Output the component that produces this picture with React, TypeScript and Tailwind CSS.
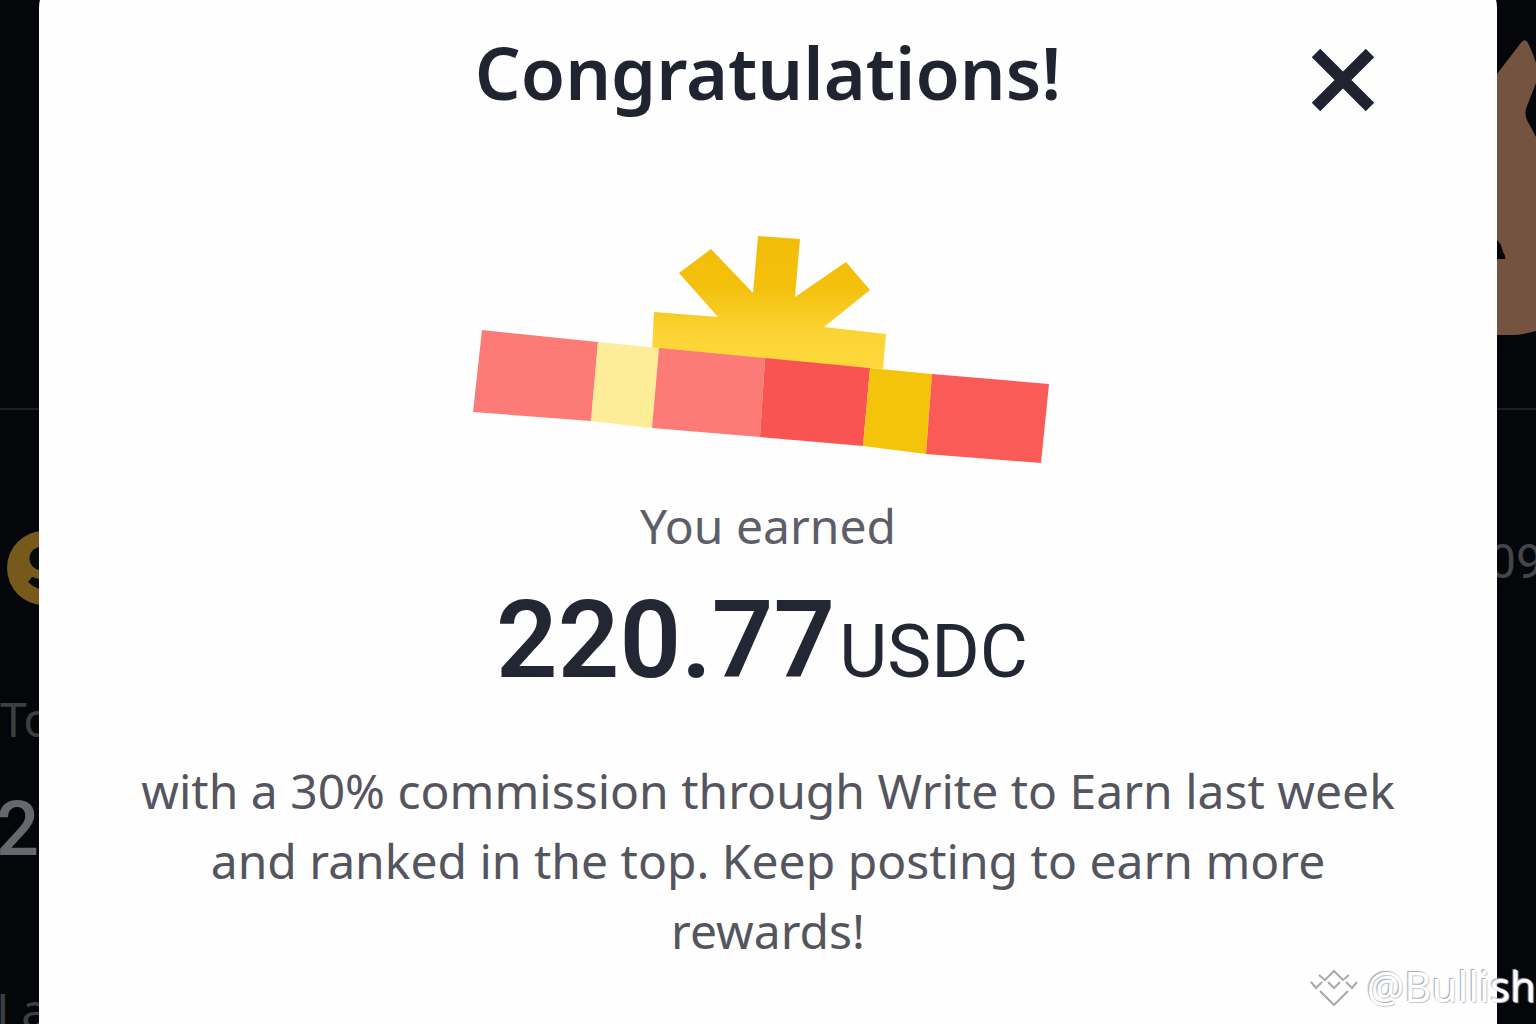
import React from "react";

const GiftLid: React.FC = () => (
  <svg viewBox="0 0 580 232" className="h-[232px] w-[580px] max-w-full" role="img" aria-label="Gift">
    <defs>
      <linearGradient id="bow" gradientUnits="userSpaceOnUse" x1="0" y1="0" x2="0" y2="130">
        <stop offset="0" stopColor="#f3bd08" />
        <stop offset="0.42" stopColor="#f3c00c" />
        <stop offset="0.78" stopColor="#fcd435" />
        <stop offset="1" stopColor="#fed73a" />
      </linearGradient>
    </defs>
    <path
      d="M184 80L248 85L209 41L241 17L283 61L288 4L330 7L325 65L376 30L400 58L354 95L416 102L413 137L182 119Z"
      fill="url(#bow)"
    />
    <path d="M12 98L128 110L121 189L3 180Z" fill="#fd7b77" />
    <path d="M128 110L189 116L182 196L121 189Z" fill="#fdec98" />
    <path d="M189 116L295 126L290 205L182 196Z" fill="#fd7b77" />
    <path d="M295 126L400 136L393 214L290 205Z" fill="#fa5452" />
    <path d="M400 136L462 142L456 222L393 214Z" fill="#f4c40b" />
    <path d="M462 142L579 152L571 231L456 222Z" fill="#fb5b57" />
  </svg>
);

const Watermark: React.FC = () => (
  <div className="absolute right-0 bottom-0 flex h-[76px] items-center gap-2 whitespace-nowrap text-white">
    <svg viewBox="0 0 48 40" className="h-10 w-12" fill="none">
      <path
        d="M9 9L15 14L24 5L33 14L39 9M1 16L6 22L12 16M18 16L24 22L30 16M36 16L42 22L47 16M10 25L24 39L38 25"
        stroke="#a9a9ad"
        strokeWidth="2"
      />
    </svg>
    <span className="text-[42px] leading-none [text-shadow:-1px_-1px_1px_#a6a6ab,1px_1px_1px_#c6c6ca]">
      @Bullish
    </span>
  </div>
);

const LeftEdge: React.FC = () => (
  <div className="flex flex-col overflow-hidden whitespace-nowrap" aria-hidden="true">
    <div className="box-content h-[408px] shrink-0 border-b-2 border-[#1c1e22]" />
    <svg viewBox="0 0 39 74" className="mt-[121px] h-[74px] w-[39px] shrink-0">
      <circle cx="44" cy="37" r="37" fill="#775a1b" />
      <path d="M39 16C31 18 28 25 30 31C32 36 35 38 39 39Z" fill="#090a0a" />
      <path d="M32 46L28 51Q33 56 39 58L39 48Z" fill="#090a0a" />
    </svg>
    <div className="mt-[86px] h-[56px] text-[48px] leading-[56px] text-[#3c3e42]">To</div>
    <div className="mt-10 -ml-1 h-[84px] font-[Roboto] text-[76px] leading-[84px] font-medium text-[#67686d]">
      2
    </div>
    <div className="mt-[111px] -ml-1 h-[41px] text-[48px] leading-[56px] text-[#3c3e42]">La</div>
  </div>
);

const RightEdge: React.FC = () => (
  <div className="flex flex-col overflow-hidden whitespace-nowrap" aria-hidden="true">
    <svg viewBox="0 0 39 408" className="h-[408px] w-[39px] shrink-0">
      <path
        d="M0 74L23 44Q28 37 31 43Q36 53 39 63V83L30 106Q27 113 30 120L39 137V331Q25 335 15 335H0V259H8Q9 256 6 252Q4 243 0 240Z"
        fill="#745440"
      />
    </svg>
    <div className="h-[2px] shrink-0 bg-[#1c1e22]" />
    <div className="mt-[122px] -ml-2 font-[Roboto] text-[48px] leading-[60px] text-[#44454a]">09</div>
  </div>
);

export default function App() {
  return (
    <div className="relative grid min-h-screen grid-cols-[39px_minmax(0,1fr)_39px] overflow-hidden bg-[#040609] font-['Noto_Sans',sans-serif]">
      <LeftEdge />
      <main
        role="dialog"
        aria-labelledby="title"
        className="-mt-7 flex flex-col items-center rounded-t-[36px] bg-[#fefefe] px-[90px] pt-7 text-center"
      >
        <header className="grid w-full grid-cols-[64px_1fr_64px] items-end pt-6">
          <h1 id="title" className="col-start-2 text-[72px] leading-[96px] font-semibold text-[#1f2430]">
            Congratulations!
          </h1>
          <button type="button" aria-label="Close" className="-ml-8 pb-2 text-[#1f2430]">
            <svg viewBox="0 0 64 64" className="h-16 w-16" fill="none">
              <path d="M5 5L59 59M59 5L5 59" stroke="currentColor" strokeWidth="12" />
            </svg>
          </button>
        </header>
        <div className="mt-28 -ml-4">
          <GiftLid />
        </div>
        <p className="mt-8 text-[48px] leading-[60px] text-[#5d5e67]">You earned</p>
        <p className="mt-5 flex items-baseline gap-1 pr-3 font-[Roboto] leading-[128px] text-[#222733]">
          <span className="text-[108px] font-semibold">220.77</span>
          <span className="text-[74px]">USDC</span>
        </p>
        <p className="mt-10 text-[48px] leading-[70px] text-[#54555e]">
          with a 30% commission through Write to Earn last week and ranked in the top. Keep posting to earn more rewards!
        </p>
      </main>
      <RightEdge />
      <Watermark />
    </div>
  );
}
